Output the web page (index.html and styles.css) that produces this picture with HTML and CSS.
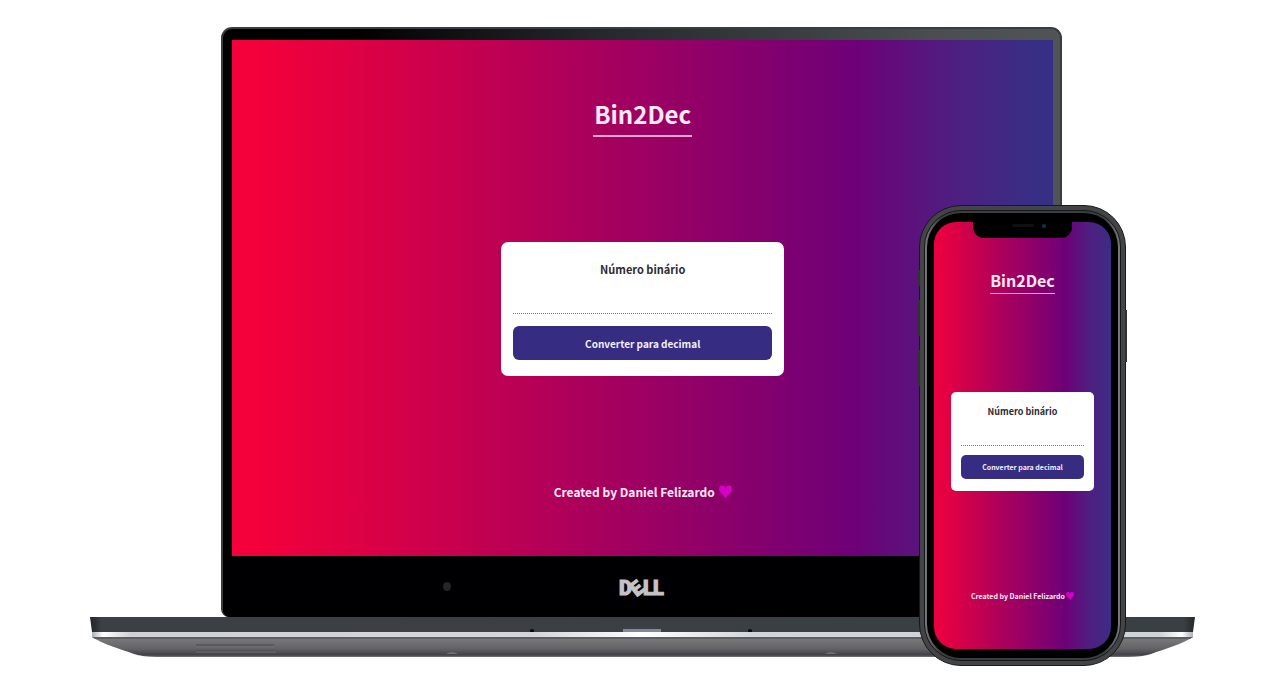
FILE: index.html
```html
<!DOCTYPE html>
<html lang="pt-BR">
<head>
<meta charset="utf-8">
<meta name="viewport" content="width=device-width, initial-scale=1">
<title>Bin2Dec</title>
<link rel="stylesheet" href="styles.css">
</head>
<body>
<main class="showcase">
  <div class="laptop">
    <div class="lid">
      <section class="screen screen-wide">
        <h1 class="title">Bin2Dec</h1>
        <form class="card">
          <label class="label" for="bin-wide">Número binário</label>
          <input class="field" id="bin-wide" type="text">
          <button class="convert" type="button">Converter para decimal</button>
        </form>
        <footer class="credit">Created by Daniel Felizardo
          <svg class="heart" viewBox="0 0 14 14" aria-hidden="true"><path d="M7 14C5 10.500 0 8 0 3.600C0 1.200 1.600 0 3.500 0C5.200 0 6.400 1 7 2.400C7.600 1 8.800 0 10.500 0C12.400 0 14 1.200 14 3.600C14 8 9 10.500 7 14Z"/></svg>
        </footer>
      </section>
      <div class="chin">
        <span class="camera"></span>
        <svg class="brand" viewBox="0 0 46 18" role="img" aria-label="Dell">
          <text x="0" y="17">D</text>
          <text x="12" y="17" transform="rotate(-38 18 10)">E</text>
          <text x="24" y="17">L</text>
          <text x="34" y="17">L</text>
        </svg>
      </div>
    </div>
    <svg class="base" viewBox="0 0 1105 40" preserveAspectRatio="none" aria-hidden="true">
      <defs>
        <linearGradient id="body" x1="0" y1="0" x2="0" y2="1">
          <stop offset="0" stop-color="#68686c"/><stop offset=".12" stop-color="#77777a"/>
          <stop offset=".6" stop-color="#626266"/><stop offset=".9" stop-color="#414145"/><stop offset="1" stop-color="#77777b"/>
        </linearGradient>
        <linearGradient id="shine" x1="0" y1="0" x2="1" y2="0">
          <stop offset="0" stop-color="#aeb0b5"/><stop offset=".01" stop-color="#fff"/><stop offset=".035" stop-color="#ced1d6"/>
          <stop offset=".4" stop-color="#d2d5da"/><stop offset=".5" stop-color="#fff"/><stop offset=".6" stop-color="#d2d5da"/>
          <stop offset=".97" stop-color="#ced4da"/><stop offset=".99" stop-color="#fff"/><stop offset="1" stop-color="#aeb0b5"/>
        </linearGradient>
        <linearGradient id="deck" x1="0" y1="0" x2="1" y2="0">
          <stop offset="0" stop-color="#25282c"/><stop offset=".005" stop-color="#2c3034"/><stop offset=".01" stop-color="#3c4044"/>
          <stop offset=".99" stop-color="#3a3f43"/><stop offset="1" stop-color="#24272a"/>
        </linearGradient>
      </defs>
      <path d="M2 20H1103C1092 27 1075 32 1061 37Q1052 40 1038 40H67Q53 40 44 37C30 32 13 27 2 20Z" fill="url(#body)"/>
      <path d="M0 0H1105L1103 15H2Z" fill="url(#deck)"/>
      <path d="M2 15H1103V20H2Z" fill="url(#shine)"/>
      <path d="M2 20H1103L1100 22H5Z" fill="#5e5e62"/>
      <path d="M533 12H571V15H533Z" fill="#858895"/>
      <path d="M440 15V13Q442 11 444 13V15ZM658 15V13Q660 11 662 13V15Z" fill="#090a0c"/>
      <path d="M106 28H184M106 34H186" stroke="#4b4b4f"/>
      <path d="M106 30H184M106 35H186" stroke="#707074"/>
      <path d="M356 37Q362 33 368 37ZM735 37Q741 33 747 37Z" fill="#707073"/>
    </svg>
    <div class="phone">
      <span class="keys keys-left"><i></i><i></i><i></i></span>
      <span class="keys keys-right"><i></i></span>
      <div class="rim">
        <div class="bezel">
          <section class="screen screen-tall">
            <span class="notch"><i class="speaker"></i><i class="lens"></i></span>
            <h2 class="title">Bin2Dec</h2>
            <form class="card">
              <label class="label" for="bin-tall">Número binário</label>
              <input class="field" id="bin-tall" type="text">
              <button class="convert" type="button">Converter para decimal</button>
            </form>
            <footer class="credit">Created by Daniel Felizardo
              <svg class="heart" viewBox="0 0 14 14" aria-hidden="true"><path d="M7 14C5 10.500 0 8 0 3.600C0 1.200 1.600 0 3.500 0C5.200 0 6.400 1 7 2.400C7.600 1 8.800 0 10.500 0C12.400 0 14 1.200 14 3.600C14 8 9 10.500 7 14Z"/></svg>
            </footer>
          </section>
        </div>
      </div>
    </div>
  </div>
</main>
</body>
</html>
```
FILE: styles.css
```css
* { box-sizing: border-box; }

body {
  margin: 0;
  background: #fff;
  font-family: "Noto Sans CJK SC", "Noto Sans", sans-serif;
  font-weight: 700;
}

.showcase { padding: 27px 85px 24px 90px; }

.laptop {
  position: relative;
  display: flex;
  flex-direction: column;
}

/* Laptop */
.lid {
  margin: 0 12% 0 131px;
  padding: 11px 7px 0 9px;
  border: 2px solid #3a3c40;
  border-bottom: 0;
  border-radius: 11px 11px 8px 8px;
  background: linear-gradient(90deg, #000 0%, #000 15%, #25282c 45%, #4a4e50 85%, #505456 100%);
}

.chin {
  display: grid;
  grid-template-columns: 1fr auto 1fr;
  align-items: center;
  height: 61px;
  margin: 0 -7px 0 -9px;
  border-radius: 0 0 7px 7px;
  background: #000002;
}

.camera {
  justify-self: center;
  width: 8px;
  height: 9px;
  margin-left: 52px;
  border-radius: 50%;
  background: #252527;
}

.brand {
  width: 46px;
  height: 18px;
  overflow: visible;
  fill: #c3c3c7;
  stroke: #c3c3c7;
  stroke-width: 1px;
  font: 900 20px Roboto, sans-serif;
}

.base {
  display: block;
  width: 100%;
  height: 40px;
}

/* Converter page */
.screen {
  display: flex;
  flex-direction: column;
  align-items: center;
  color: #fce9f5;
  background: linear-gradient(90deg, #f4003a 3%, #6e0078 76%, #4e1f80 88%, #372f85 98%);
}

.title {
  margin: 0;
  border-bottom: 2px solid #e0a8d0;
}

.card {
  display: flex;
  flex-direction: column;
  background: #fff;
}

.label { color: #2e2a33; text-align: center; }

.field {
  width: 100%;
  padding: 0;
  border: 0;
  border-bottom: 1px dotted #77738c;
  background: transparent;
  font: inherit;
  text-align: center;
  outline: 0;
}

.convert {
  padding: 0;
  border: 0;
  color: #f0eefa;
  background: #362d82;
  font: inherit;
}

.credit {
  display: flex;
  align-items: center;
  white-space: nowrap;
}

.heart { fill: #d600c8; }

.screen-wide { gap: 105px; padding: 54px 16px 53px; }
.screen-wide .title { padding: 0 1px 1px; font-size: 24px; line-height: 40px; }
.screen-wide .card { width: 283px; max-width: 100%; padding: 16px 12px; border-radius: 7px; font-size: 10px; }
.screen-wide .label { font-size: 11px; line-height: 22px; }
.screen-wide .field { height: 34px; }
.screen-wide .convert { height: 34px; margin-top: 12px; border-radius: 6px; }
.screen-wide .credit { gap: 4px; font-size: 12px; line-height: 22px; }
.screen-wide .heart { width: 13px; height: 14px; }

/* Phone, standing in front of the laptop */
.phone {
  position: absolute;
  right: 69px;
  bottom: -9px;
  width: 207px;
  padding: 4px;
  border: 1px solid #18191a;
  border-radius: 42px;
  background: #424446;
}

.rim {
  padding: 2px;
  border: 1px solid #151617;
  border-radius: 37px;
  background: linear-gradient(90deg, #77797a, #3b3d3f 8%, #3b3d3f 92%, #77797a);
}

.bezel {
  padding: 9px 7px;
  border-radius: 34px;
  background: #000;
}

.screen-tall {
  position: relative;
  gap: 98px;
  padding: 45px 12px 46px;
  border-radius: 22px;
  background: linear-gradient(90deg, #ea0040 3%, #6e0078 74%, #4e1f80 88%, #3f2a84 98%);
}

.screen-tall .title { padding: 0; border-width: 1px; font-size: 16px; line-height: 26px; }
.screen-tall .card { width: 94%; padding: 12px 10px; border-radius: 5px; font-size: 7px; }
.screen-tall .label { font-size: 9px; line-height: 16px; }
.screen-tall .field { height: 26px; }
.screen-tall .convert { height: 24px; margin-top: 9px; border-radius: 5px; }
.screen-tall .credit { gap: 1px; font-size: 7px; line-height: 14px; }
.screen-tall .heart { width: 8px; height: 8px; }

.notch {
  position: absolute;
  top: -1px;
  left: 22%;
  right: 22%;
  display: flex;
  align-items: center;
  justify-content: flex-end;
  gap: 8px;
  height: 17px;
  padding: 0 26px 8px 0;
  border-radius: 0 0 11px 11px;
  background: #000;
}

.speaker { width: 22px; height: 3px; border-radius: 2px; background: #111113; }
.lens { width: 4px; height: 4px; border-radius: 50%; background: #0b3450; }

.keys {
  position: absolute;
  top: 64px;
  display: flex;
  flex-direction: column;
  gap: 14px;
}

.keys i { width: 2px; height: 36px; background: #303234; }
.keys-left { left: -2px; }
.keys-left i:first-child { height: 16px; }
.keys-right { top: 104px; right: -2px; }
.keys-right i { height: 52px; }
```
